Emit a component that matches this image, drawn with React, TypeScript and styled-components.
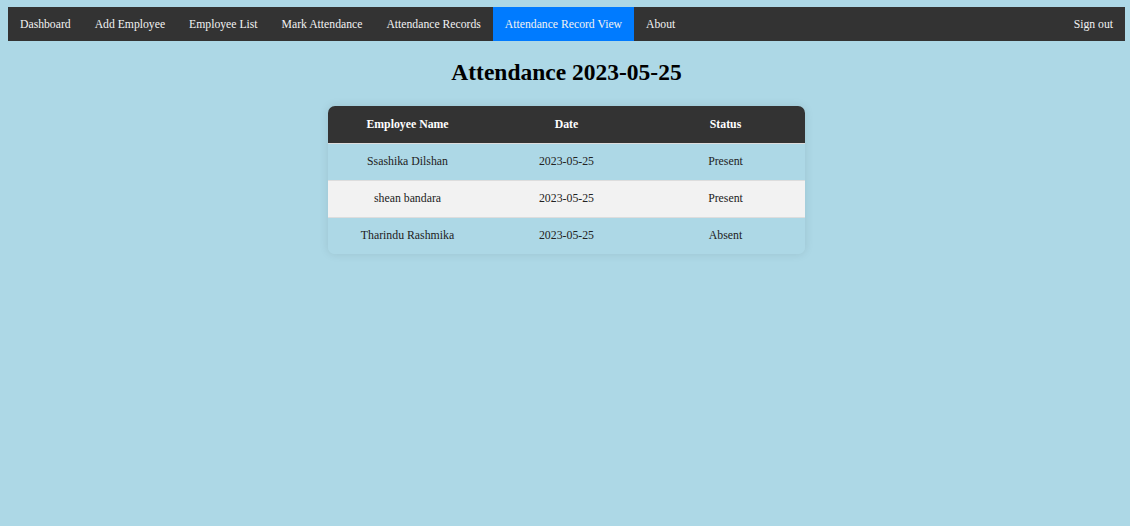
import React from "react";
import styled, { createGlobalStyle } from "styled-components";

const GlobalStyle = createGlobalStyle`
  html, body {
    margin: 0;
    padding: 0;
    background: #add8e6;
    font-family: "Liberation Serif", "Times New Roman", serif;
  }
`;

const Page = styled.div`
  min-height: 526px;
  padding: 7px 5px 0 8px;
  box-sizing: border-box;
`;

const NavBar = styled.nav`
  display: flex;
  align-items: stretch;
  height: 34px;
  background: #333333;
`;

const NavLink = styled.a<{ $active?: boolean }>`
  display: flex;
  align-items: center;
  padding: 0 12px;
  font-size: 11.7px;
  color: #f2f2f2;
  text-decoration: none;
  background: ${(p) => (p.$active ? "#007bff" : "transparent")};
`;

const Spacer = styled.div`
  flex: 1;
`;

const Title = styled.h1`
  margin: 17px 0 0;
  text-align: center;
  font-size: 23.5px;
  font-weight: bold;
  color: #000;
  line-height: 28px;
`;

const TableWrap = styled.div`
  width: 477px;
  margin: 20px auto 0;
  border-radius: 7px;
  overflow: hidden;
  box-shadow: 0 0 10px rgba(0, 0, 0, 0.1);
`;

const Table = styled.table`
  width: 100%;
  border-collapse: collapse;
  table-layout: fixed;
  font-size: 11.8px;
`;

const HeadCell = styled.th`
  height: 37px;
  padding: 0;
  background: #333333;
  color: #ffffff;
  font-weight: bold;
  text-align: center;
  border-bottom: 1px solid #ddd;
  box-sizing: border-box;
`;

const Row = styled.tr<{ $alt?: boolean }>`
  background: ${(p) => (p.$alt ? "#f2f2f2" : "#add8e6")};
`;

const Cell = styled.td<{ $last?: boolean }>`
  height: 37px;
  padding: 0;
  text-align: center;
  color: #222;
  border-bottom: ${(p) => (p.$last ? "none" : "1px solid #ddd")};
  box-sizing: border-box;
`;

const navItems = [
  "Dashboard",
  "Add Employee",
  "Employee List",
  "Mark Attendance",
  "Attendance Records",
  "Attendance Record View",
  "About",
];

const records = [
  { name: "Ssashika Dilshan", date: "2023-05-25", status: "Present" },
  { name: "shean bandara", date: "2023-05-25", status: "Present" },
  { name: "Tharindu Rashmika", date: "2023-05-25", status: "Absent" },
];

export default function App() {
  return (
    <>
      <GlobalStyle />
      <Page>
        <NavBar>
          {navItems.map((item) => (
            <NavLink key={item} href="#" $active={item === "Attendance Record View"}>
              {item}
            </NavLink>
          ))}
          <Spacer />
          <NavLink href="#">Sign out</NavLink>
        </NavBar>
        <Title>Attendance 2023-05-25</Title>
        <TableWrap>
          <Table>
            <thead>
              <tr>
                <HeadCell>Employee Name</HeadCell>
                <HeadCell>Date</HeadCell>
                <HeadCell>Status</HeadCell>
              </tr>
            </thead>
            <tbody>
              {records.map((r, i) => {
                const last = i === records.length - 1;
                return (
                  <Row key={r.name} $alt={i % 2 === 1}>
                    <Cell $last={last}>{r.name}</Cell>
                    <Cell $last={last}>{r.date}</Cell>
                    <Cell $last={last}>{r.status}</Cell>
                  </Row>
                );
              })}
            </tbody>
          </Table>
        </TableWrap>
      </Page>
    </>
  );
}
